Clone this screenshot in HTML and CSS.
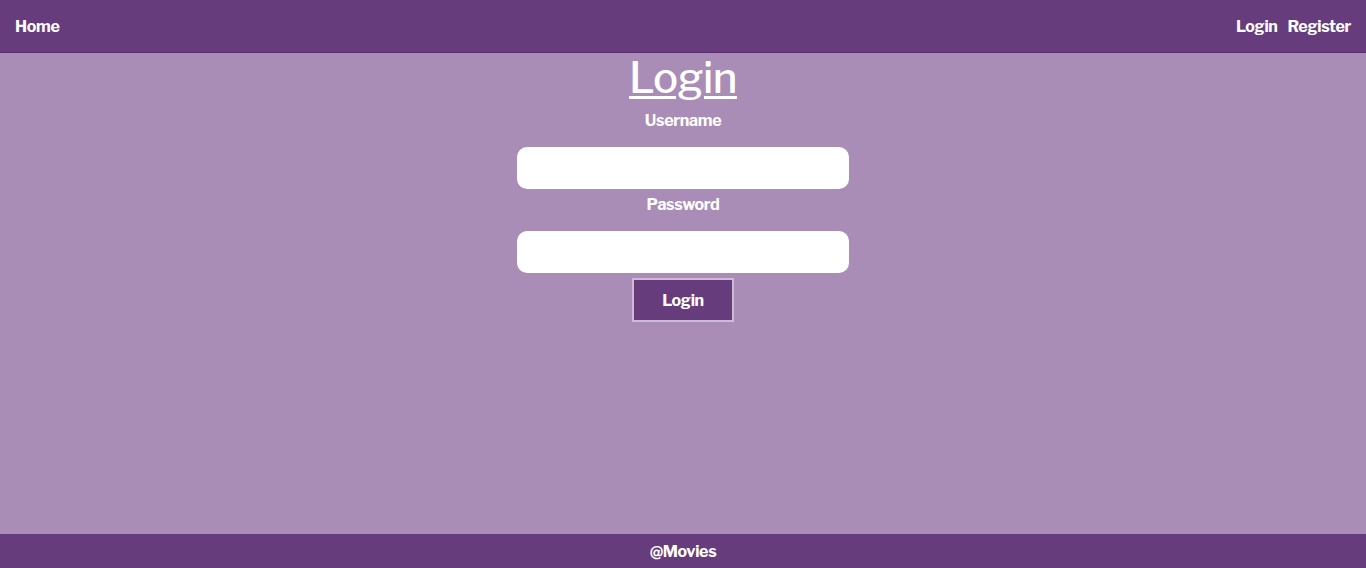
FILE: index.html
```html
<!DOCTYPE html>
<html lang="en">
<head>
<meta charset="utf-8">
<title>Login</title>
<link rel="stylesheet" href="styles.css">
</head>
<body>
<header class="topbar">
  <a class="nav-link" href="#">Home</a>
  <nav class="nav-right">
    <a class="nav-link" href="#">Login</a>
    <a class="nav-link" href="#">Register</a>
  </nav>
</header>
<main class="content">
  <h1 class="title">Login</h1>
  <form class="login-form">
    <label class="field-label" for="u">Username</label>
    <input class="field-input" id="u" type="text">
    <label class="field-label" for="p">Password</label>
    <input class="field-input" id="p" type="password">
    <button class="submit-btn" type="button">Login</button>
  </form>
</main>
<footer class="footer">@Movies</footer>
</body>
</html>
```
FILE: styles.css
```css
* { box-sizing: border-box; }
html, body { margin: 0; padding: 0; height: 100%; }
body {
  display: flex;
  flex-direction: column;
  min-height: 100vh;
  background: #a98db7;
  font-family: "Libre Franklin", Roboto, "Liberation Sans", sans-serif;
  color: #fff;
}
.topbar {
  height: 53px;
  background: #673c7d;
  display: flex;
  align-items: center;
  justify-content: space-between;
  padding: 0 15px;
  border-bottom: 1px solid #5a3070;
}
.nav-right { display: flex; gap: 10px; }
.nav-link {
  color: #fff;
  text-decoration: none;
  font-weight: 700;
  font-size: 16px;
  letter-spacing: -0.3px;
}
.content {
  flex: 1;
  display: flex;
  flex-direction: column;
  align-items: center;
}
.title {
  margin: 0;
  font-size: 42px;
  font-weight: 500;
  line-height: 50px;
  text-decoration: underline;
  text-decoration-thickness: 3px;
  text-underline-offset: 3px;
  letter-spacing: -0.5px;
}
.login-form {
  display: flex;
  flex-direction: column;
  align-items: center;
}
.field-label {
  font-weight: 700;
  font-size: 16px;
  line-height: 20px;
  margin-top: 8px;
  letter-spacing: -0.3px;
}
.field-input {
  width: 332px;
  height: 42px;
  margin-top: 16px;
  border: none;
  border-radius: 10px;
  background: #fff;
  outline: none;
}
.field-input + .field-label { margin-top: 6px; }
.submit-btn {
  margin-top: 5px;
  width: 102px;
  height: 44px;
  background: #673c7d;
  border: 2px solid #cdbad7;
  color: #fff;
  font-family: inherit;
  font-weight: 700;
  font-size: 16px;
  letter-spacing: -0.3px;
}
.footer {
  height: 34px;
  background: #673c7d;
  display: flex;
  align-items: center;
  justify-content: center;
  font-weight: 700;
  font-size: 16px;
  letter-spacing: -0.3px;
}
```
